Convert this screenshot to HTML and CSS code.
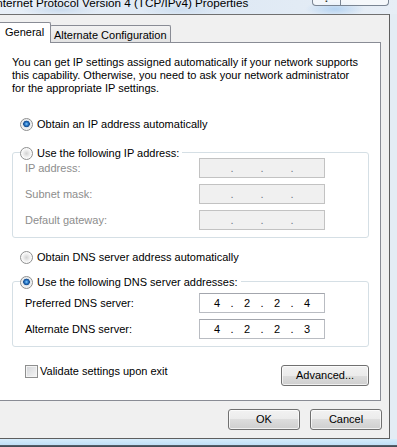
FILE: index.html
```html
<!DOCTYPE html>
<html lang="en">

<head>
    <meta charset="UTF-8">
    <title>Internet Protocol Version 4 (TCP/IPv4) Properties</title>
    <link rel="stylesheet" href="styles.css">
</head>

<body>
    <div class="titlebar">
        <span class="title">Internet Protocol Version 4 (TCP/IPv4) Properties</span>
        <div class="caption">
            <div class="cap-help"><span>?</span></div>
            <div class="cap-close"></div>
        </div>
    </div>

    <div class="client">
        <div class="tabs">
            <div class="tab tab-active">General</div>
            <div class="tab tab-alt">Alternate Configuration</div>
        </div>

        <div class="panel">
            <div class="intro">
                You can get IP settings assigned automatically if your network supports<br>
                this capability. Otherwise, you need to ask your network administrator<br>
                for the appropriate IP settings.
            </div>

            <div class="radio-row opt-ip">
                <span class="radio on"></span>
                <span>Obtain an IP address automatically</span>
            </div>

            <div class="group group-ip">
                <div class="radio-row legend">
                    <span class="radio"></span>
                    <span>Use the following IP address:</span>
                </div>
                <div class="field-row disabled">
                    <span class="field-label">IP address:</span>
                    <div class="ip-box">
                        <span class="oct"></span><span class="dot">.</span><span class="oct"></span><span class="dot">.</span><span class="oct"></span><span class="dot">.</span><span class="oct"></span>
                    </div>
                </div>
                <div class="field-row disabled">
                    <span class="field-label">Subnet mask:</span>
                    <div class="ip-box">
                        <span class="oct"></span><span class="dot">.</span><span class="oct"></span><span class="dot">.</span><span class="oct"></span><span class="dot">.</span><span class="oct"></span>
                    </div>
                </div>
                <div class="field-row disabled">
                    <span class="field-label">Default gateway:</span>
                    <div class="ip-box">
                        <span class="oct"></span><span class="dot">.</span><span class="oct"></span><span class="dot">.</span><span class="oct"></span><span class="dot">.</span><span class="oct"></span>
                    </div>
                </div>
            </div>

            <div class="radio-row opt-dns">
                <span class="radio"></span>
                <span>Obtain DNS server address automatically</span>
            </div>

            <div class="group group-dns">
                <div class="radio-row legend">
                    <span class="radio on"></span>
                    <span>Use the following DNS server addresses:</span>
                </div>
                <div class="field-row">
                    <span class="field-label">Preferred DNS server:</span>
                    <div class="ip-box">
                        <span class="oct">4</span><span class="dot">.</span><span class="oct">2</span><span class="dot">.</span><span class="oct">2</span><span class="dot">.</span><span class="oct">4</span>
                    </div>
                </div>
                <div class="field-row">
                    <span class="field-label">Alternate DNS server:</span>
                    <div class="ip-box">
                        <span class="oct">4</span><span class="dot">.</span><span class="oct">2</span><span class="dot">.</span><span class="oct">2</span><span class="dot">.</span><span class="oct">3</span>
                    </div>
                </div>
            </div>

            <div class="bottom-row">
                <div class="check">
                    <span class="checkbox"></span>
                    <span>Validate settings upon exit</span>
                </div>
                <button class="btn btn-adv">Advanced...</button>
            </div>
        </div>

        <div class="footer">
            <button class="btn btn-dlg">OK</button>
            <button class="btn btn-dlg">Cancel</button>
        </div>
    </div>

    <div class="glass-bottom"></div>
</body>

</html>
```

FILE: styles.css
```css
html,
body {
    margin: 0;
    width: 397px;
    height: 447px;
    overflow: hidden;
}

body {
    font-family: "Liberation Sans", Arial, sans-serif;
    font-size: 11px;
    line-height: 13px;
    color: #000;
    background: #e4ecf4;
}

/* title bar (glass) */
.titlebar {
    height: 14px;
    display: flex;
    justify-content: space-between;
    align-items: flex-start;
    overflow: hidden;
    background:
        radial-gradient(ellipse 30px 8px at 335px 9px, #b5d3f1, transparent),
        radial-gradient(ellipse 40px 6px at 60px 10px, #cbdcee, transparent),
        radial-gradient(ellipse 40px 6px at 180px 10px, #cfdff0, transparent),
        linear-gradient(90deg, #e8eff7, #dde8f4 50%, #e7eef6);
}

.title {
    font-size: 11.7px;
    line-height: 12px;
    margin: -3px 0 0 -7px;
    white-space: nowrap;
}

.caption {
    display: flex;
    width: 75px;
    height: 5px;
    margin-right: 8px;
    border: 1px solid #7a8593;
    border-top: 0;
    border-radius: 0 0 4px 4px;
    background: rgba(255, 255, 255, 0.6);
    overflow: hidden;
}

.cap-help {
    width: 27px;
    border-right: 1px solid #7a8593;
    text-align: center;
    overflow: hidden;
}

.cap-help span {
    display: block;
    margin-top: -8px;
    line-height: 12px;
    font-weight: bold;
    color: #333;
}

/* client area */
.client {
    box-sizing: border-box;
    width: 390px;
    height: 425px;
    padding-top: 7px;
    border-top: 1px solid #707070;
    border-right: 1px solid #5e5e5e;
    border-bottom: 1px solid #5e5e5e;
    background: #f0f0f0;
}

.tabs {
    display: flex;
    align-items: flex-end;
    height: 20px;
    margin-left: -2px;
}

.tab {
    box-sizing: border-box;
    border: 1px solid #898c95;
    border-bottom: 0;
    border-radius: 2px 2px 0 0;
    white-space: nowrap;
}

.tab-active {
    position: relative;
    z-index: 1;
    width: 53px;
    height: 21px;
    margin-bottom: -1px;
    padding: 3px 0 0 6px;
    background: #fff;
}

.tab-alt {
    width: 121px;
    height: 17px;
    margin-left: -1px;
    padding: 3px 0 0 3px;
    background: linear-gradient(#f3f3f3, #e3e3e3);
}

.panel {
    box-sizing: border-box;
    width: 382px;
    height: 359px;
    margin-left: -1px;
    padding: 13px 11px 0 12px;
    border: 1px solid #898c95;
    background: #fff;
}

.intro {
    white-space: nowrap;
}

.radio-row {
    display: flex;
    align-items: center;
    gap: 4px;
    height: 13px;
    margin-left: 8px;
    white-space: nowrap;
}

.radio {
    box-sizing: border-box;
    width: 13px;
    height: 13px;
    border: 1px solid #8e8f8f;
    border-radius: 50%;
    background: radial-gradient(circle at 50% 50%, #d3d3d3 0, #ececec 3px, #fbfbfb 5px);
}

.radio.on {
    background: radial-gradient(circle at 50% 45%, #8fd0f8 0, #2f7fd0 1.5px, #114a8c 3px, #dce3ea 3.6px, #f2f2f2 5px);
}

.opt-ip {
    margin-top: 23px;
}

.opt-dns {
    margin-top: 13px;
}

.group {
    box-sizing: border-box;
    padding-bottom: 7px;
    border: 1px solid #d5dfe5;
    border-radius: 3px;
}

.group-ip {
    margin-top: 21px;
}

.group-dns {
    margin-top: 17px;
}

.legend {
    width: fit-content;
    margin: -6px 0 -2px 7px;
    padding-right: 3px;
    background: #fff;
}

.group-dns .legend {
    margin-bottom: 4px;
}

.field-row {
    display: flex;
    align-items: center;
    height: 20px;
    padding-left: 12px;
}

.field-row + .field-row {
    margin-top: 6px;
}

.field-label {
    width: 174px;
}

.ip-box {
    box-sizing: border-box;
    display: flex;
    width: 126px;
    height: 20px;
    padding-left: 5px;
    line-height: 18px;
    border: 1px solid #b9bcc2;
    border-top-color: #a3a6ad;
    background: #fff;
}

.oct {
    width: 24px;
    text-align: center;
}

.dot {
    width: 6px;
    text-align: center;
}

.disabled .field-label {
    color: #8d8d8d;
}

.disabled .ip-box {
    border-color: #c2c2c2;
    background: #f0f0f0;
}

.disabled .dot {
    color: #6f7a86;
}

.bottom-row {
    display: flex;
    justify-content: space-between;
    align-items: flex-start;
    margin-top: 18px;
}

.check {
    display: flex;
    align-items: center;
    gap: 2px;
    height: 13px;
    margin-left: 13px;
    white-space: nowrap;
}

.checkbox {
    box-sizing: border-box;
    width: 13px;
    height: 13px;
    border: 1px solid #8e8f8f;
    background: linear-gradient(135deg, #d2d4d8, #f6f6f6);
    box-shadow: inset 0 0 0 1px #f4f4f4;
}

/* buttons */
.btn {
    box-sizing: border-box;
    height: 21px;
    padding: 0;
    border: 1px solid #707070;
    border-radius: 3px;
    background: linear-gradient(#f2f2f2, #ebebeb 50%, #dddddd 50%, #cfcfcf);
    box-shadow: inset 0 0 0 1px rgba(255, 255, 255, 0.7);
    font: inherit;
    line-height: 19px;
    color: #000;
    text-align: center;
}

.btn-adv {
    width: 88px;
}

.footer {
    display: flex;
    justify-content: flex-end;
    gap: 10px;
    margin-top: 8px;
    padding-right: 7px;
}

.btn-dlg {
    width: 72px;
}

.glass-bottom {
    height: 8px;
    background: linear-gradient(#d6ecfb, #c2e1f7 70%, #5c6670 75%, #3d4650);
}
```
